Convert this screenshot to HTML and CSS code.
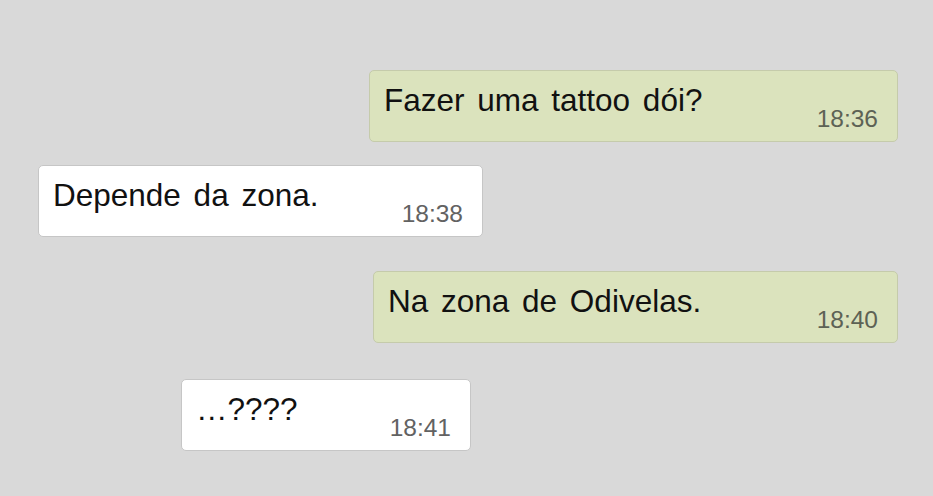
FILE: index.html
```html
<!DOCTYPE html>
<html lang="pt">
<head>
   <meta charset="UTF-8">
   <meta name="viewport" content="width=device-width, initial-scale=1.0">
   <title>Conversa</title>
   <link rel="stylesheet" href="styles.css">
</head>
<body>

<div class="chat">
   <div class="row row-out first">
       <div class="bubble out w1">
           <span class="text">Fazer uma tattoo dói?</span>
           <span class="time">18:36</span>
       </div>
   </div>
   <div class="row row-in second">
       <div class="bubble in w2">
           <span class="text">Depende da zona.</span>
           <span class="time">18:38</span>
       </div>
   </div>
   <div class="row row-out third">
       <div class="bubble out w3">
           <span class="text">Na zona de Odivelas.</span>
           <span class="time">18:40</span>
       </div>
   </div>
   <div class="row row-in fourth">
       <div class="bubble in w4">
           <span class="text">…????</span>
           <span class="time">18:41</span>
       </div>
   </div>
</div>

</body>
</html>
```

FILE: styles.css
```css
body {
    font-family: "Liberation Sans", Arial, sans-serif;
    background-color: #d9d9d9;
    margin: 0;
    height: 496px;
    overflow: hidden;
}
.chat {
    display: flex;
    flex-direction: column;
    padding: 70px 35px 0 38px;
}
.row {
    display: flex;
}
.row-out {
    justify-content: flex-end;
}
.row-in {
    justify-content: flex-start;
}
.second {
    margin-top: 23px;
}
.third {
    margin-top: 34px;
}
.fourth {
    margin-top: 36px;
    padding-left: 143px;
}
.bubble {
    display: flex;
    justify-content: space-between;
    align-items: flex-start;
    box-sizing: border-box;
    height: 72px;
    padding: 10px 19px 10px 14px;
    border-radius: 5px;
}
.bubble.out {
    background-color: #dbe3bd;
    border: 1px solid #c5cbab;
}
.bubble.in {
    background-color: #ffffff;
    border: 1px solid #c6c6c6;
}
.w1 {
    width: 529px;
}
.w2 {
    width: 445px;
}
.w3 {
    width: 525px;
}
.w4 {
    width: 290px;
}
.text {
    font-size: 31.5px;
    line-height: 38px;
    word-spacing: 4px;
    color: #111;
}
.time {
    align-self: flex-end;
    font-size: 24.5px;
    line-height: 24px;
    color: #626262;
}
.out .time {
    color: #5d6255;
}
```
